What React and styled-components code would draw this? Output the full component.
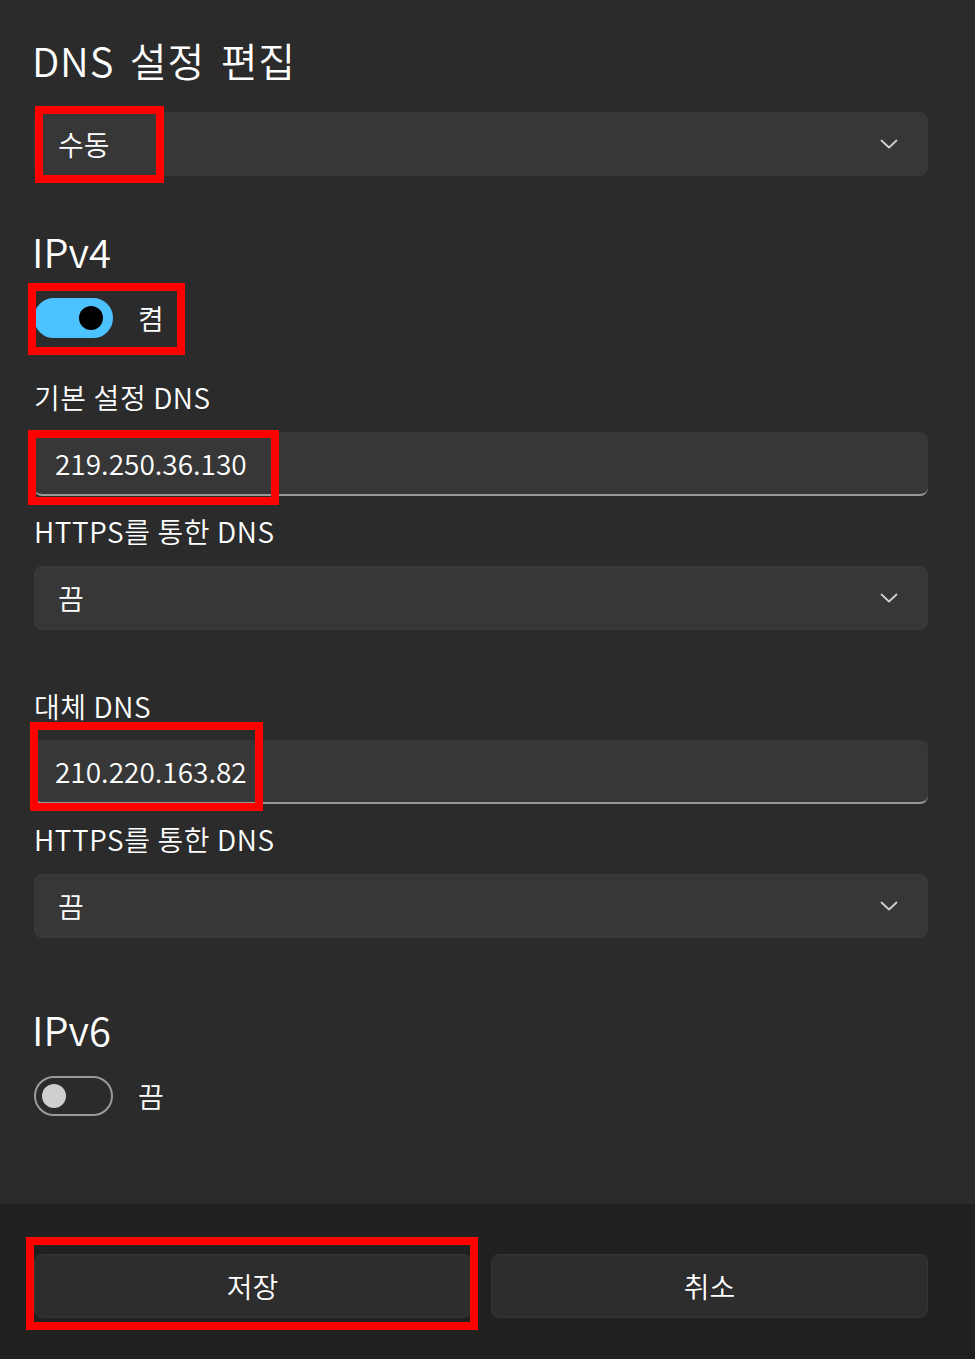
import React from 'react';
import styled, { createGlobalStyle } from 'styled-components';

const GlobalStyle = createGlobalStyle`
    html, body {
        margin: 0;
        padding: 0;
        background: #2b2b2b;
    }
    body {
        font-family: "Noto Sans CJK KR", "Noto Sans", sans-serif;
        font-weight: 350;
        color: #ffffff;
    }
`

function Chevron() {
    return (
        <svg width="18" height="10" viewBox="0 0 18 10" fill="none">
            <path d="M1.5 1.5 L9 8.5 L16.5 1.5" stroke="#d0d0d0" strokeWidth="1.8" strokeLinecap="round" strokeLinejoin="round" />
        </svg>
    )
}

function App() {
    return (
        <Page>
            <GlobalStyle />
            <Main>
                <Title>DNS 설정 편집</Title>
                <Select $mt={28}>
                    <span>수동</span>
                    <Chevron />
                    <Highlight $left={0} $top={-7} $w={129} $h={77} />
                </Select>

                <Heading $mt={51}>IPv4</Heading>
                <ToggleRow $mt={23}>
                    <Toggle $on>
                        <Knob $on />
                    </Toggle>
                    <ToggleText>켬</ToggleText>
                    <Highlight $left={-6} $top={-15} $w={157} $h={72} />
                </ToggleRow>

                <Label $mt={41}>기본 설정 DNS</Label>
                <Input $mt={17}>
                    219.250.36.130
                    <Highlight $left={-6} $top={-2} $w={251} $h={75} />
                </Input>
                <Label $mt={17}>HTTPS를 통한 DNS</Label>
                <Select $mt={17}>
                    <span>끔</span>
                    <Chevron />
                </Select>

                <Label $mt={58}>대체 DNS</Label>
                <Input $mt={16}>
                    210.220.163.82
                    <Highlight $left={-4} $top={-18} $w={233} $h={89} />
                </Input>
                <Label $mt={17}>HTTPS를 통한 DNS</Label>
                <Select $mt={17}>
                    <span>끔</span>
                    <Chevron />
                </Select>

                <Heading $mt={67}>IPv6</Heading>
                <ToggleRow $mt={23}>
                    <Toggle>
                        <Knob />
                    </Toggle>
                    <ToggleText>끔</ToggleText>
                </ToggleRow>
            </Main>
            <Footer>
                <Button>
                    저장
                    <Highlight $left={-9} $top={-18} $w={452} $h={93} />
                </Button>
                <Button>취소</Button>
            </Footer>
        </Page>
    )
}

export default App;

const Page = styled.div`
    min-height: 100vh;
    display: flex;
    flex-direction: column;
`

const Main = styled.div`
    flex: 1;
    display: flex;
    flex-direction: column;
    padding: 36px 47px 0 34px;
`

const Title = styled.h1`
    margin: 0 0 0 -2px;
    font-size: 40px;
    font-weight: 350;
    line-height: 48px;
    letter-spacing: 0.8px;
    word-spacing: 6px;
`

const Heading = styled.h2`
    margin: ${p => p.$mt}px 0 0 -2px;
    font-size: 40px;
    font-weight: 350;
    line-height: 48px;
`

const Label = styled.div`
    margin-top: ${p => p.$mt}px;
    font-size: 28px;
    line-height: 36px;
    letter-spacing: 0.6px;
`

const Select = styled.div`
    position: relative;
    margin-top: ${p => p.$mt}px;
    height: 64px;
    box-sizing: border-box;
    display: flex;
    align-items: center;
    justify-content: space-between;
    padding: 0 29px 0 23px;
    background: #373737;
    border: 1px solid #3a3a3a;
    border-radius: 8px;
    font-size: 28px;
`

const Input = styled.div`
    position: relative;
    margin-top: ${p => p.$mt}px;
    height: 64px;
    box-sizing: border-box;
    display: flex;
    align-items: center;
    padding: 0 21px;
    background: #373737;
    border-radius: 8px;
    border-bottom: 2px solid #9a9a9a;
    font-size: 28px;
`

const ToggleRow = styled.div`
    position: relative;
    margin-top: ${p => p.$mt}px;
    display: flex;
    align-items: center;
    gap: 25px;
`

const Toggle = styled.div`
    width: 79px;
    height: 40px;
    box-sizing: border-box;
    border-radius: 20px;
    display: flex;
    align-items: center;
    justify-content: ${p => p.$on ? 'flex-end' : 'flex-start'};
    padding: 0 ${p => p.$on ? 8 : 6}px;
    background: ${p => p.$on ? '#4cc2ff' : 'transparent'};
    border: 2px solid ${p => p.$on ? '#4cc2ff' : '#9a9a9a'};
`

const Knob = styled.div`
    width: 24px;
    height: 24px;
    border-radius: 50%;
    background: ${p => p.$on ? '#000000' : '#cfcfcf'};
`

const ToggleText = styled.span`
    font-size: 28px;
    line-height: 36px;
`

const Footer = styled.div`
    height: 155px;
    box-sizing: border-box;
    background: #202020;
    display: grid;
    grid-template-columns: 1fr 1fr;
    gap: 20px;
    padding: 50px 47px 0 34px;
    align-items: start;
`

const Button = styled.div`
    position: relative;
    height: 64px;
    box-sizing: border-box;
    display: flex;
    align-items: center;
    justify-content: center;
    background: #2d2d2d;
    border: 1px solid #353535;
    border-radius: 8px;
    font-size: 28px;
`

const Highlight = styled.div`
    position: absolute;
    left: ${p => p.$left}px;
    top: ${p => p.$top}px;
    width: ${p => p.$w}px;
    height: ${p => p.$h}px;
    box-sizing: border-box;
    border: 8px solid #ff0000;
    pointer-events: none;
`
